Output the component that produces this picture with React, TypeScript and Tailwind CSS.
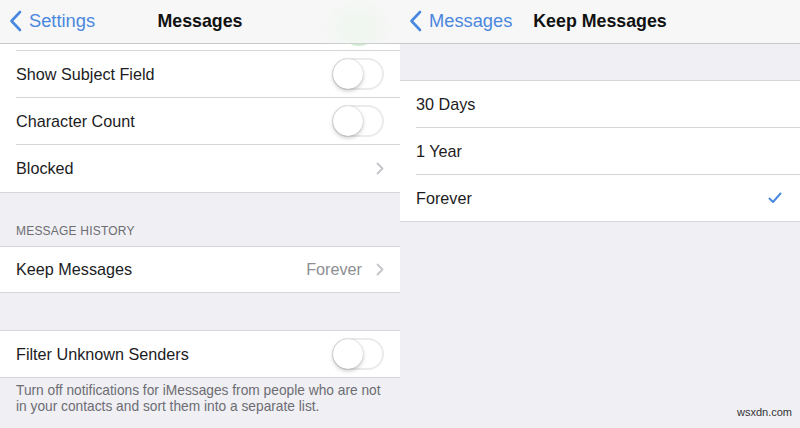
import React from "react";

const BLUE = "#4a87de";

function BackChevron() {
  return (
    <svg width="13" height="22" viewBox="0 0 13 22" fill="none">
      <path d="M11 2 L2.5 11 L11 20" stroke={BLUE} strokeWidth="2.6" strokeLinecap="round" strokeLinejoin="round" />
    </svg>
  );
}

function Chevron() {
  return (
    <svg width="8" height="13" viewBox="0 0 8 13" fill="none">
      <path d="M1.5 1.5 L6.5 6.5 L1.5 11.5" stroke="#c4c4c9" strokeWidth="1.8" strokeLinecap="round" strokeLinejoin="round" />
    </svg>
  );
}

function Toggle() {
  return (
    <div className="w-[52px] h-[32px] rounded-full border-2 border-[#ebebee] bg-white relative">
      <div className="absolute left-[-1px] top-[-1px] w-[30px] h-[30px] rounded-full bg-white shadow-[0_2px_4px_rgba(0,0,0,0.22),0_0_1px_rgba(0,0,0,0.3)]" />
    </div>
  );
}

function Row({ label, right, last, h = "h-[47px]" }: { label: string; right?: React.ReactNode; last?: boolean; h?: string }) {
  return (
    <div className={`${h} bg-white pl-4 flex`}>
      <div className={`flex-1 flex items-center pr-4 ${last ? "" : "border-b border-[#d6d6da]"}`}>
        <span className="flex-1 text-[16.2px] text-[#1c1c1e]">{label}</span>
        {right}
      </div>
    </div>
  );
}

function Nav({ back, title }: { back: string; title: string }) {
  return (
    <div className="h-[44px] bg-[#f7f7f7] border-b border-[#c9c9cc] grid grid-cols-[1fr_auto_1fr] items-center pb-[1px]">
      <div className="flex items-center gap-[7px] pl-[9px] z-10">
        <BackChevron />
        <span className="text-[18.3px] text-[#4a87de]">{back}</span>
      </div>
      <span className="font-bold text-[17.8px] text-[#111] z-10">{title}</span>
      <div />
    </div>
  );
}

export default function App() {
  return (
    <div className="w-[800px] h-[428px] flex overflow-hidden bg-[#efeff4] font-['Liberation_Sans',Arial,sans-serif] relative">
      {/* Left panel */}
      <div className="w-[400px] flex flex-col">
        <div className="relative">
          <Nav back="Settings" title="Messages" />
          <div className="absolute left-[334px] top-[10px] w-[48px] h-[36px] rounded-full bg-[#e2f5e2] opacity-40 blur-md" />
        </div>
        <div className="h-[7px] bg-white pl-4 flex relative overflow-hidden">
          <div className="flex-1 border-b border-[#d6d6da]" />
          <div className="absolute left-[342px] top-[-30px] w-[34px] h-[32px] rounded-full border-b-[3px] border-[#a8d8a8] opacity-50" />
        </div>
        <Row label="Show Subject Field" right={<Toggle />} />
        <Row label="Character Count" right={<Toggle />} />
        <Row label="Blocked" right={<Chevron />} last />
        <div className="h-[54px] border-t border-[#d6d6da] flex items-end pl-4 pb-[6px]">
          <span className="text-[12px] text-[#6d6d72] tracking-[0.2px]">MESSAGE HISTORY</span>
        </div>
        <div className="border-t border-b border-[#d6d6da]">
          <Row
            label="Keep Messages"
            last
            h="h-[45px]"
            right={
              <div className="flex items-center gap-[14px]">
                <span className="text-[16.2px] text-[#8e8e93]">Forever</span>
                <Chevron />
              </div>
            }
          />
        </div>
        <div className="h-[37px]" />
        <div className="border-t border-b border-[#d6d6da]">
          <Row label="Filter Unknown Senders" right={<Toggle />} last h="h-[46px]" />
        </div>
        <div className="pl-4 pr-4 pt-[5px] text-[13.75px] leading-[16px] text-[#6d6d72]">
          Turn off notifications for iMessages from people who are not in your contacts and sort them into a separate list.
        </div>
      </div>

      {/* Right panel */}
      <div className="w-[400px] flex flex-col">
        <Nav back="Messages" title="Keep Messages" />
        <div className="h-[36px]" />
        <div className="border-t border-b border-[#d6d6da]">
          <Row label="30 Days" />
          <Row label="1 Year" />
          <Row
            label="Forever"
            last
            h="h-[46px]"
            right={
              <svg width="14" height="12" viewBox="0 0 14 12" fill="none" className="mr-[2px]">
                <path d="M1.5 6.5 L5 10 L12.5 1.5" stroke={BLUE} strokeWidth="2" strokeLinecap="round" strokeLinejoin="round" />
              </svg>
            }
          />
        </div>
        <div className="flex-1 flex items-end justify-end pr-[8px] pb-[8px]">
          <span className="text-[11px] text-[#333]">wsxdn.com</span>
        </div>
      </div>
    </div>
  );
}
